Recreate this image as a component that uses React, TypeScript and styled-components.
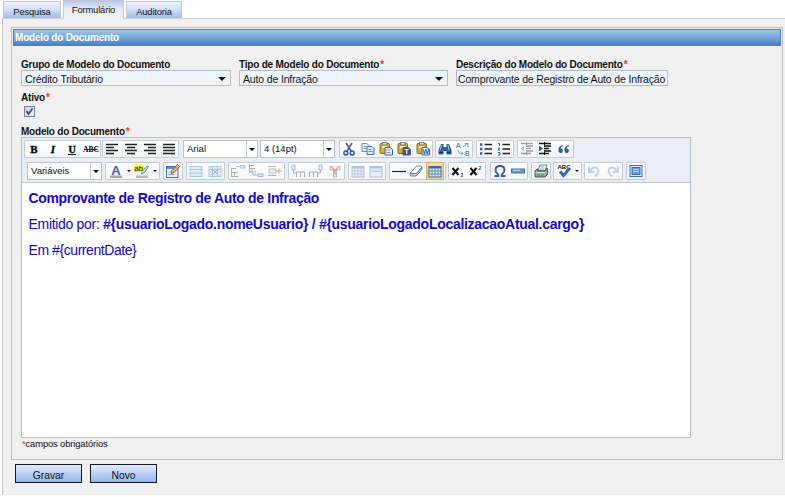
import React from 'react';
import styled, { createGlobalStyle } from 'styled-components';

const GlobalStyle = createGlobalStyle`
  * { box-sizing: border-box; }
  body { margin: 0; background: #fff; font-family: "Liberation Sans", Arial, sans-serif; color: #111; }
`;

const Page = styled.div`
  width: 785px;
  height: 497px;
  overflow: hidden;
  background: #fff;
`;

const TabBar = styled.div`
  display: flex;
  align-items: flex-end;
  gap: 2px;
  height: 18px;
  padding-left: 3px;
`;

const Tab = styled.div<{ $w: number; $active?: boolean }>`
  width: ${p => p.$w}px;
  height: ${p => (p.$active ? 19 : 17)}px;
  margin-bottom: ${p => (p.$active ? -1 : 0)}px;
  position: relative;
  border: 1px solid #c3c9d4;
  border-bottom: 0;
  background: ${p =>
    p.$active
      ? 'linear-gradient(#b5c9f2, #e6ebf5 45%, #f1f1f1 80%)'
      : 'linear-gradient(#eef3fc, #d3e0f9 45%, #9dbcf2)'};
  font-size: 9.4px;
  letter-spacing: -0.15px;
  line-height: ${p => (p.$active ? 18 : 19)}px;
  text-align: center;
`;

const Panel = styled.div`
  width: 783px;
  height: 477px;
  margin-left: 2px;
  padding: 8px 0 0 8px;
  border-left: 1px solid #c4c4c4;
  border-top: 1px solid #d2d2d2;
  background: #f1f1f1;
`;

const Fieldset = styled.div`
  width: 772px;
  height: 433px;
  padding: 1px 1px 0;
  border: 1px solid #bfbfbf;
`;

const Heading = styled.div`
  height: 17px;
  padding-left: 1px;
  border: 1px solid #4c7fb8;
  background: linear-gradient(#9fc4e6, #79a8d8 50%, #4b80c2);
  color: #fff;
  font-size: 10px;
  letter-spacing: -0.2px;
  font-weight: bold;
  line-height: 16px;
`;

const Form = styled.div`
  padding: 13px 0 0 8px;
`;

const FieldRow = styled.div`
  display: flex;
  gap: 8px;
  height: 33px;
`;

const Field = styled.div<{ $w: number }>`
  width: ${p => p.$w}px;
`;

const Label = styled.div`
  height: 11px;
  font-size: 10px;
  letter-spacing: -0.21px;
  font-weight: bold;
  line-height: 12px;
  white-space: nowrap;
`;

const Star = styled.span`
  margin-left: 1px;
  color: #f0302a;
`;

const Input = styled.div<{ $pad?: number }>`
  display: flex;
  align-items: center;
  justify-content: space-between;
  height: 16px;
  padding: 2px 4px 0 ${p => p.$pad ?? 3}px;
  border: 1px solid #b2bdc7;
  background: #edf6fe;
  font-size: 10.5px;
  letter-spacing: -0.15px;
  white-space: nowrap;
`;

const Caret = styled.span<{ $s?: number }>`
  flex: none;
  border: ${p => p.$s ?? 3}px solid transparent;
  border-top-color: #111;
  border-bottom: 0;
`;

const CheckBox = styled.div`
  width: 11px;
  height: 11px;
  margin: 3px 0 0 3px;
  border: 1px solid #7189a0;
  background: linear-gradient(135deg, #c9cfd8, #f5f7fa);
  svg { display: block; }
`;

const ActiveRow = styled.div`
  height: 34px;
`;

const Editor = styled.div`
  width: 670px;
  height: 301px;
  border: 1px solid #b9bfc7;
  background: #fff;
`;

const EditorLabel = styled(Label)`
  height: 11px;
`;

const Toolbar = styled.div`
  height: 45px;
  padding-top: 2px;
  border-bottom: 1px solid #c3c8cf;
  background: #e8eef7;
`;

const ToolRow = styled.div`
  display: flex;
  height: 22px;
  padding-left: 2px;
`;

const Group = styled.div<{ $w: number; $gap?: number }>`
  flex: none;
  display: flex;
  align-items: center;
  justify-content: space-around;
  width: ${p => p.$w}px;
  height: 18px;
  margin-left: ${p => p.$gap ?? 0}px;
  border: 1px solid #c5ccd6;
  border-radius: 1px;
  background: linear-gradient(#fff, #f3f6fb);
  svg { flex: none; display: block; }
`;

const Select = styled.div<{ $w: number; $gap: number }>`
  flex: none;
  display: flex;
  width: ${p => p.$w}px;
  height: 18px;
  margin-left: ${p => p.$gap}px;
  border: 1px solid #bcc3cd;
  background: #fff;
  font-size: 9.5px;
  line-height: 16px;
`;

const SelectText = styled.div`
  flex: 1;
  padding-left: 3px;
`;

const SelectArrow = styled.div`
  display: flex;
  align-items: center;
  justify-content: center;
  width: 11px;
  border-left: 1px solid #c9ced6;
`;

const Pressed = styled.div`
  display: flex;
  align-items: center;
  justify-content: center;
  width: 18px;
  height: 18px;
  border: 1px solid #e8b25a;
  background: linear-gradient(#fbe0a8, #f7c878 50%, #fbb94e 50%, #fbd48a);
`;

const Content = styled.div`
  padding: 2px 0 0 6.5px;
  color: #1106d6;
  font-size: 14px;
  line-height: 26px;
  white-space: nowrap;
`;

const Line = styled.div<{ $tight: number; $boldTight?: number }>`
  letter-spacing: ${p => p.$tight}px;
  b { letter-spacing: ${p => p.$boldTight ?? p.$tight}px; }
`;

const Required = styled.div`
  padding: 0 0 0 1px;
  font-size: 9.4px;
  letter-spacing: -0.12px;
  line-height: 12px;
  ${Star} { margin-left: 0; }
`;

const Actions = styled.div`
  display: flex;
  gap: 8px;
  padding: 4px 0 0 4px;
`;

const Button = styled.div`
  width: 67px;
  height: 19px;
  border: 1px solid #14181f;
  background: linear-gradient(#e3ecfb, #c0d3f6 45%, #94b5ee);
  font-size: 10.3px;
  line-height: 22px;
  text-align: center;
`;

type Kids = { children: React.ReactNode; o?: number };
const Icon = ({ children, o = 1 }: Kids) => (
  <svg width="16" height="16" viewBox="0 0 16 16" opacity={o}>{children}</svg>
);

const Glyph = ({ t, italic, line, size = 11, y = 12 }: { t: string; italic?: boolean; line?: 'u' | 's'; size?: number; y?: number }) => (
  <Icon>
    <text x="8" y={y} textAnchor="middle" fontFamily="Liberation Serif" fontWeight="bold" fontSize={size} fontStyle={italic ? 'italic' : 'normal'} stroke="#111" strokeWidth={size > 8 ? 0.4 : 0}>{t}</text>
    {line === 'u' && <path d="M4 13.500h8" stroke="#111" />}
    {line === 's' && <path d="M1 8.500h14" stroke="#111" strokeWidth=".8" />}
  </Icon>
);

const Align = ({ d }: { d: string }) => <Icon><path d={d} stroke="#222" strokeWidth="1.5" fill="none" /></Icon>;

const Scissors = () => (
  <Icon>
    <path d="M5 2l5 8M11 2L6 10" stroke="#52647e" strokeWidth="1.700" />
    <circle cx="4.800" cy="12" r="1.900" fill="none" stroke="#2558a8" strokeWidth="1.500" />
    <circle cx="11.200" cy="12" r="1.900" fill="none" stroke="#2558a8" strokeWidth="1.500" />
  </Icon>
);
const Copy = () => (
  <Icon>
    <path d="M2 2.500h5l2 2v6H2z" fill="#f0f6ff" stroke="#668fc5" />
    <path d="M7 5.500h5l2 2v6H7z" fill="#dceaff" stroke="#3e70b5" />
    <path d="M3.500 5.500h3M3.500 7.500h3M8.500 8.500h3M8.500 10.500h4" stroke="#6b97d0" />
  </Icon>
);
const Paste = ({ t }: { t?: string }) => (
  <Icon>
    <rect x="2" y="2.500" width="9.500" height="10" rx="1" fill="#d9a92f" stroke="#866b22" />
    <rect x="4.500" y="1.500" width="4.500" height="2.500" fill="#ddd" stroke="#666" strokeWidth=".7" />
    <path d="M4 6h5" stroke="#fff0a0" strokeWidth="2" />
    <path d="M7 6.500h5l2.500 2v5.500H7z" fill={t === 'T' ? '#574868' : '#e9f2ff'} stroke="#45618f" />
    {t ? <text x="10.700" y="13.200" textAnchor="middle" fontSize="7" fontWeight="bold" fontFamily="Liberation Sans" fill={t === 'T' ? '#fff' : '#195bc0'}>{t}</text>
      : <path d="M8.500 9h4M8.500 11.500h4" stroke="#6a93c8" />}
  </Icon>
);
const Binoculars = () => (
  <Icon>
    <path d="M4 3h2.500v3h3V3H12l2.500 6v4.500H9.500V10h-3v3.500h-5V9z" fill="#2d5ba4" />
    <path d="M4.500 4L3 9.500M11 4l1 5.500" stroke="#a9c7ec" />
    <path d="M2 11.500h4M10 11.500h4" stroke="#142f63" />
  </Icon>
);
const Replace = () => (
  <Icon>
    <text x="1" y="7" fontSize="7" fontFamily="Liberation Sans" fill="#2558a8">A</text>
    <text x="10" y="14.500" fontSize="7" fontFamily="Liberation Sans" fill="#2558a8">B</text>
    <path d="M8 6l5-3.500m0 3.500V2.500H9.500M3 9q0 4 5 3.500m-2-2l2 2-2 2" fill="none" stroke="#4f80c8" strokeDasharray="1.800 .6" />
  </Icon>
);
const List = ({ num }: { num?: boolean }) => (
  <Icon>
    <path d="M6.500 3.500H14M6.500 8H14M6.500 12.500H14" stroke="#222" strokeWidth="1.300" />
    {num
      ? <path d="M2 2.500h1.500V5M2 7h2L2 9h2M2 11.500h2v2.500H2" stroke="#2d5fb5" fill="none" />
      : <path d="M2 2.300h2.400v2.400H2zM2 6.800h2.400v2.400H2zM2 11.300h2.400v2.400H2z" fill="#2d5fb5" />}
  </Icon>
);
const Indent = ({ out }: { out?: boolean }) => (
  <Icon o={out ? 0.4 : 1}>
    <path d="M2 2.500h12M7 5h7M7 7.500h5M7 10h7M2 12.500h10" stroke="#111" strokeWidth="1.300" />
    <path d={out ? 'M5 5L1.500 7.500 5 10z' : 'M2 4.700l4 2.800-4 2.800z'} fill="#2456b8" />
    <path d="M7.500 1v13" stroke="#111" strokeDasharray="1 1" />
  </Icon>
);
const Quote = () => (
  <Icon>
    <path d="M7 4Q2 5 2.500 9.500a2.200 2.200 0 1 0 2-2Q4.500 5.500 7 5zM13 4Q8 5 8.500 9.500a2.200 2.200 0 1 0 2-2Q10.500 5.500 13 5z" fill="#2c59a0" />
  </Icon>
);
const ForeColor = () => (
  <Icon>
    <text x="8" y="11.500" textAnchor="middle" fontSize="13" fontWeight="bold" fontFamily="Liberation Sans" fill="#3a62a6">A</text>
    <rect x="2" y="12.500" width="12" height="2.500" fill="#a3a8b0" />
  </Icon>
);
const BackColor = () => (
  <Icon>
    <path d="M14.500 3.500l-4 6-3 1.500 1-3 4.500-5z" fill="#ced8e6" stroke="#5a6d88" strokeWidth=".8" />
    <rect x="0" y="1.500" width="9.500" height="7.500" fill="#f7ed35" />
    <text x="0.300" y="8" fontSize="8" fontFamily="Liberation Sans" fill="#111">ab</text>
    <rect x="2" y="12.500" width="12" height="2.500" fill="#b5b8bd" />
  </Icon>
);
const EditCss = () => (
  <Icon>
    <rect x="1.500" y="3.500" width="11.500" height="11" fill="#eaf3ff" stroke="#3c6ead" />
    <path d="M2 5h11" stroke="#5f92d0" strokeWidth="2" />
    <path d="M3.500 9h3M3.500 11.500h6" stroke="#86addb" />
    <path d="M6 10.500l1-3 5.500-6 2.200 2-5.700 6z" fill="#eeb247" stroke="#755226" strokeWidth=".8" />
  </Icon>
);
const TableProps = ({ cell }: { cell?: boolean }) => (
  <Icon o={0.48}>
    <rect x="2" y="3.500" width="12" height="10" fill="#c9def8" stroke="#5d8dcb" />
    <path d={cell ? 'M5.500 4v9M10.500 4v9M2 6.500h12' : 'M2 6.500h12M2 10h12'} stroke="#5d8dcb" />
    {cell && <path d="M6 7l4 4M10 7l-4 4" stroke="#345d9b" />}
  </Icon>
);
const RowTool = ({ k }: { k: number }) => (
  <Icon o={0.45}>
    {k === 0 && <><path d="M1 5.500h5M1 9.500h7M1 13.500h7M1.500 5v9M4.500 9v5" stroke="#555" /><path d="M10 2.500h5v2.500h-5zM9 3.500H6" fill="#cfe2fa" stroke="#2e68b8" /></>}
    {k === 1 && <><path d="M1 2.500h5M1 5.500h6M1 9h7M1.500 2v7M4 5v4" stroke="#555" /><path d="M10 11h5v2.500h-5zM9 12H5V9.500" fill="#cfe2fa" stroke="#2e68b8" /></>}
    {k === 2 && <><path d="M1 3.500h8M1 12.500h8" stroke="#555" /><path d="M2 6h7v4H2z" fill="#d8dce5" stroke="#777" /><path d="M9 8h6M12 5.500v5" stroke="#bd3530" /></>}
  </Icon>
);
const ColTool = ({ k }: { k: number }) => (
  <Icon o={0.45}>
    {k === 0 && <><path d="M2 2h3v5H2zM3.500 7v3H6" fill="#cfe2fa" stroke="#2e68b8" /><path d="M6.500 14V9h8v5M10.500 9v5" fill="none" stroke="#555" /></>}
    {k === 1 && <><path d="M11 2h3v5h-3zM12.500 7v3H10" fill="#cfe2fa" stroke="#2e68b8" /><path d="M1.500 14V9h8v5M5.500 9v5" fill="none" stroke="#555" /></>}
    {k === 2 && <><path d="M3 3v4h10V3M6.500 7v7h3V7" fill="#edd" stroke="#666" /><path d="M4 3l4 5 4-5M8 8v4" fill="none" stroke="#c82d2d" strokeWidth="1.300" /></>}
  </Icon>
);
const Grid = ({ o = 1, merged }: { o?: number; merged?: boolean }) => (
  <Icon o={o}>
    <rect x="2" y="3.500" width="12" height="10.500" fill={o < 1 ? '#cfe2fa' : '#eef5ff'} stroke="#3869ae" />
    <path d="M2 4.500h12" stroke="#3869ae" strokeWidth="2" />
    <path d={merged ? 'M5 6v3M8 6v3M11 6v3M2 8.500h12' : 'M5 5v9M8 5v9M11 5v9M2 8h12M2 11h12'} stroke="#5b87c4" />
  </Icon>
);
const Eraser = () => (
  <Icon>
    <path d="M2 10.500L8 3.500q.5-.5 1.500-.5H13q1.500.5.5 2L8.500 10.500z" fill="#fbfdff" stroke="#5b7eaf" />
    <path d="M2 10.500q-.3 2.500 1.500 2.500H8q3-2.500 6-7V4L8.500 10.500z" fill="#c9daf0" stroke="#5b7eaf" />
  </Icon>
);
const Script = ({ up }: { up?: boolean }) => (
  <Icon>
    <path d="M2.500 5l6 7M8.500 5l-6 7" stroke="#111" strokeWidth="2" />
    <text x="10.500" y={up ? 6.5 : 13.5} fontSize="5" fontWeight="bold" fontFamily="Liberation Sans" fill="#234f9d">2</text>
  </Icon>
);
const Omega = () => (
  <Icon>
    <path d="M2.500 13h3.800v-1.500Q3.500 9.500 3.500 7 3.500 3 8 3t4.500 4q0 2.500-2.800 4.500V13h3.800" fill="none" stroke="#2d5ba5" strokeWidth="1.800" />
  </Icon>
);
const Bar = () => (
  <Icon>
    <rect x="1.500" y="6" width="13" height="4" fill="#6f9bd6" stroke="#4672b0" />
    <path d="M3 7.300h7" stroke="#cfe1f9" />
  </Icon>
);
const Print = () => (
  <Icon>
    <path d="M5 7l2-5h7l-2 6z" fill="#fff" stroke="#688" />
    <path d="M7.500 4h4M7 6h4" stroke="#9ab" />
    <path d="M2 8l2-2h1l-.5 2H12l2-3 .7 1v5L12 14H2z" fill="#9aaba3" stroke="#43544d" />
    <path d="M2.500 9.500H12" stroke="#dfe8e2" /><path d="M4 12h7" stroke="#45b549" strokeWidth="1.500" />
  </Icon>
);
const Spell = () => (
  <Icon>
    <text x="8" y="6" textAnchor="middle" fontSize="6" fontWeight="bold" fontFamily="Liberation Sans" fill="#111">ABC</text>
    <path d="M4 8.500l3.500 4L14 5" fill="none" stroke="#2e66bd" strokeWidth="2.800" />
  </Icon>
);
const Undo = ({ redo }: { redo?: boolean }) => (
  <Icon o={0.38}>
    <path transform={redo ? 'translate(16 0) scale(-1 1)' : undefined} d="M4 8q3-5 7-3 4 3-2 8.500M3 3.500V9h5.500" fill="none" stroke="#5a8fd8" strokeWidth="2" />
  </Icon>
);
const Full = () => (
  <Icon>
    <rect x="2" y="2.500" width="12" height="11" fill="#e6f0ff" stroke="#3c6ec0" />
    <rect x="4" y="4.500" width="8" height="7" fill="#6c9ae4" stroke="#3767b8" />
    <path d="M5 6.500h6M5 8.500h6" stroke="#bcd5fa" />
  </Icon>
);

const Combo = ({ text, w, gap }: { text: string; w: number; gap: number }) => (
  <Select $w={w} $gap={gap}>
    <SelectText>{text}</SelectText>
    <SelectArrow><Caret $s={3} /></SelectArrow>
  </Select>
);

export default function App() {
  return (
    <Page>
      <GlobalStyle />
      <TabBar>
        <Tab $w={58}>Pesquisa</Tab>
        <Tab $w={61} $active>Formulário</Tab>
        <Tab $w={56}>Auditoria</Tab>
      </TabBar>
      <Panel>
        <Fieldset>
          <Heading>Modelo do Documento</Heading>
          <Form>
            <FieldRow>
              <Field $w={210}>
                <Label>Grupo de Modelo do Documento</Label>
                <Input>Crédito Tributário<Caret $s={4} /></Input>
              </Field>
              <Field $w={209}>
                <Label>Tipo de Modelo do Documento<Star>*</Star></Label>
                <Input>Auto de Infração<Caret $s={4} /></Input>
              </Field>
              <Field $w={212}>
                <Label>Descrição do Modelo do Documento<Star>*</Star></Label>
                <Input $pad={1}>Comprovante de Registro de Auto de Infração</Input>
              </Field>
            </FieldRow>
            <ActiveRow>
              <Label>Ativo<Star>*</Star></Label>
              <CheckBox>
                <svg width="9" height="9" viewBox="0 0 9 9"><path d="M1.500 4l2 3L7.500 1.500" fill="none" stroke="#36408c" strokeWidth="1.700" /></svg>
              </CheckBox>
            </ActiveRow>
            <EditorLabel>Modelo do Documento<Star>*</Star></EditorLabel>
            <Editor>
              <Toolbar>
                <ToolRow>
                  <Group $w={77}>
                    <Glyph t="B" /><Glyph t="I" italic /><Glyph t="U" line="u" size={10} y={11.5} /><Glyph t="ABC" line="s" size={7.5} y={11} />
                  </Group>
                  <Group $w={77} $gap={1}>
                    <Align d="M2 3.500h12M2 6.500h8M2 9.500h12M2 12.500h8" />
                    <Align d="M2 3.500h12M4 6.500h8M2 9.500h12M4 12.500h8" />
                    <Align d="M2 3.500h12M6 6.500h8M2 9.500h12M6 12.500h8" />
                    <Align d="M2 3.500h12M2 6.500h12M2 9.500h12M2 12.500h12" />
                  </Group>
                  <Combo text="Arial" w={75} gap={4} />
                  <Combo text="4 (14pt)" w={75} gap={2} />
                  <Group $w={94} $gap={4}><Scissors /><Copy /><Paste /><Paste t="T" /><Paste t="W" /></Group>
                  <Group $w={38} $gap={2}><Binoculars /><Replace /></Group>
                  <Group $w={38} $gap={3}><List /><List num /></Group>
                  <Group $w={57} $gap={3}><Indent out /><Indent /><Quote /></Group>
                </ToolRow>
                <ToolRow>
                  <Combo text="Variáveis" w={75} gap={3} />
                  <Group $w={55} $gap={3}><ForeColor /><Caret $s={2.5} /><BackColor /><Caret $s={2.5} /></Group>
                  <Group $w={20} $gap={3}><EditCss /></Group>
                  <Group $w={39} $gap={3}><TableProps /><TableProps cell /></Group>
                  <Group $w={57} $gap={3}><RowTool k={0} /><RowTool k={1} /><RowTool k={2} /></Group>
                  <Group $w={57} $gap={3}><ColTool k={0} /><ColTool k={1} /><ColTool k={2} /></Group>
                  <Group $w={38} $gap={3}><Grid o={0.4} /><Grid o={0.4} merged /></Group>
                  <Group $w={57} $gap={3}>
                    <Icon><path d="M1 8.500h14" stroke="#222" strokeWidth="1.200" /></Icon><Eraser /><Pressed><Grid /></Pressed>
                  </Group>
                  <Group $w={38} $gap={2}><Script /><Script up /></Group>
                  <Group $w={38} $gap={4}><Omega /><Bar /></Group>
                  <Group $w={20} $gap={3}><Print /></Group>
                  <Group $w={29} $gap={2}><Spell /><Caret $s={2.5} /></Group>
                  <Group $w={39} $gap={2}><Undo /><Undo redo /></Group>
                  <Group $w={20} $gap={3}><Full /></Group>
                </ToolRow>
              </Toolbar>
              <Content>
                <Line $tight={-0.34}><b>Comprovante de Registro de Auto de Infração</b></Line>
                <Line $tight={-0.31} $boldTight={-0.29}>Emitido por: <b>{'#{usuarioLogado.nomeUsuario} / #{usuarioLogadoLocalizacaoAtual.cargo}'}</b></Line>
                <Line $tight={-0.43}>{'Em #{currentDate}'}</Line>
              </Content>
            </Editor>
            <Required><Star>*</Star>campos obrigatórios</Required>
          </Form>
        </Fieldset>
        <Actions>
          <Button>Gravar</Button>
          <Button>Novo</Button>
        </Actions>
      </Panel>
    </Page>
  );
}
